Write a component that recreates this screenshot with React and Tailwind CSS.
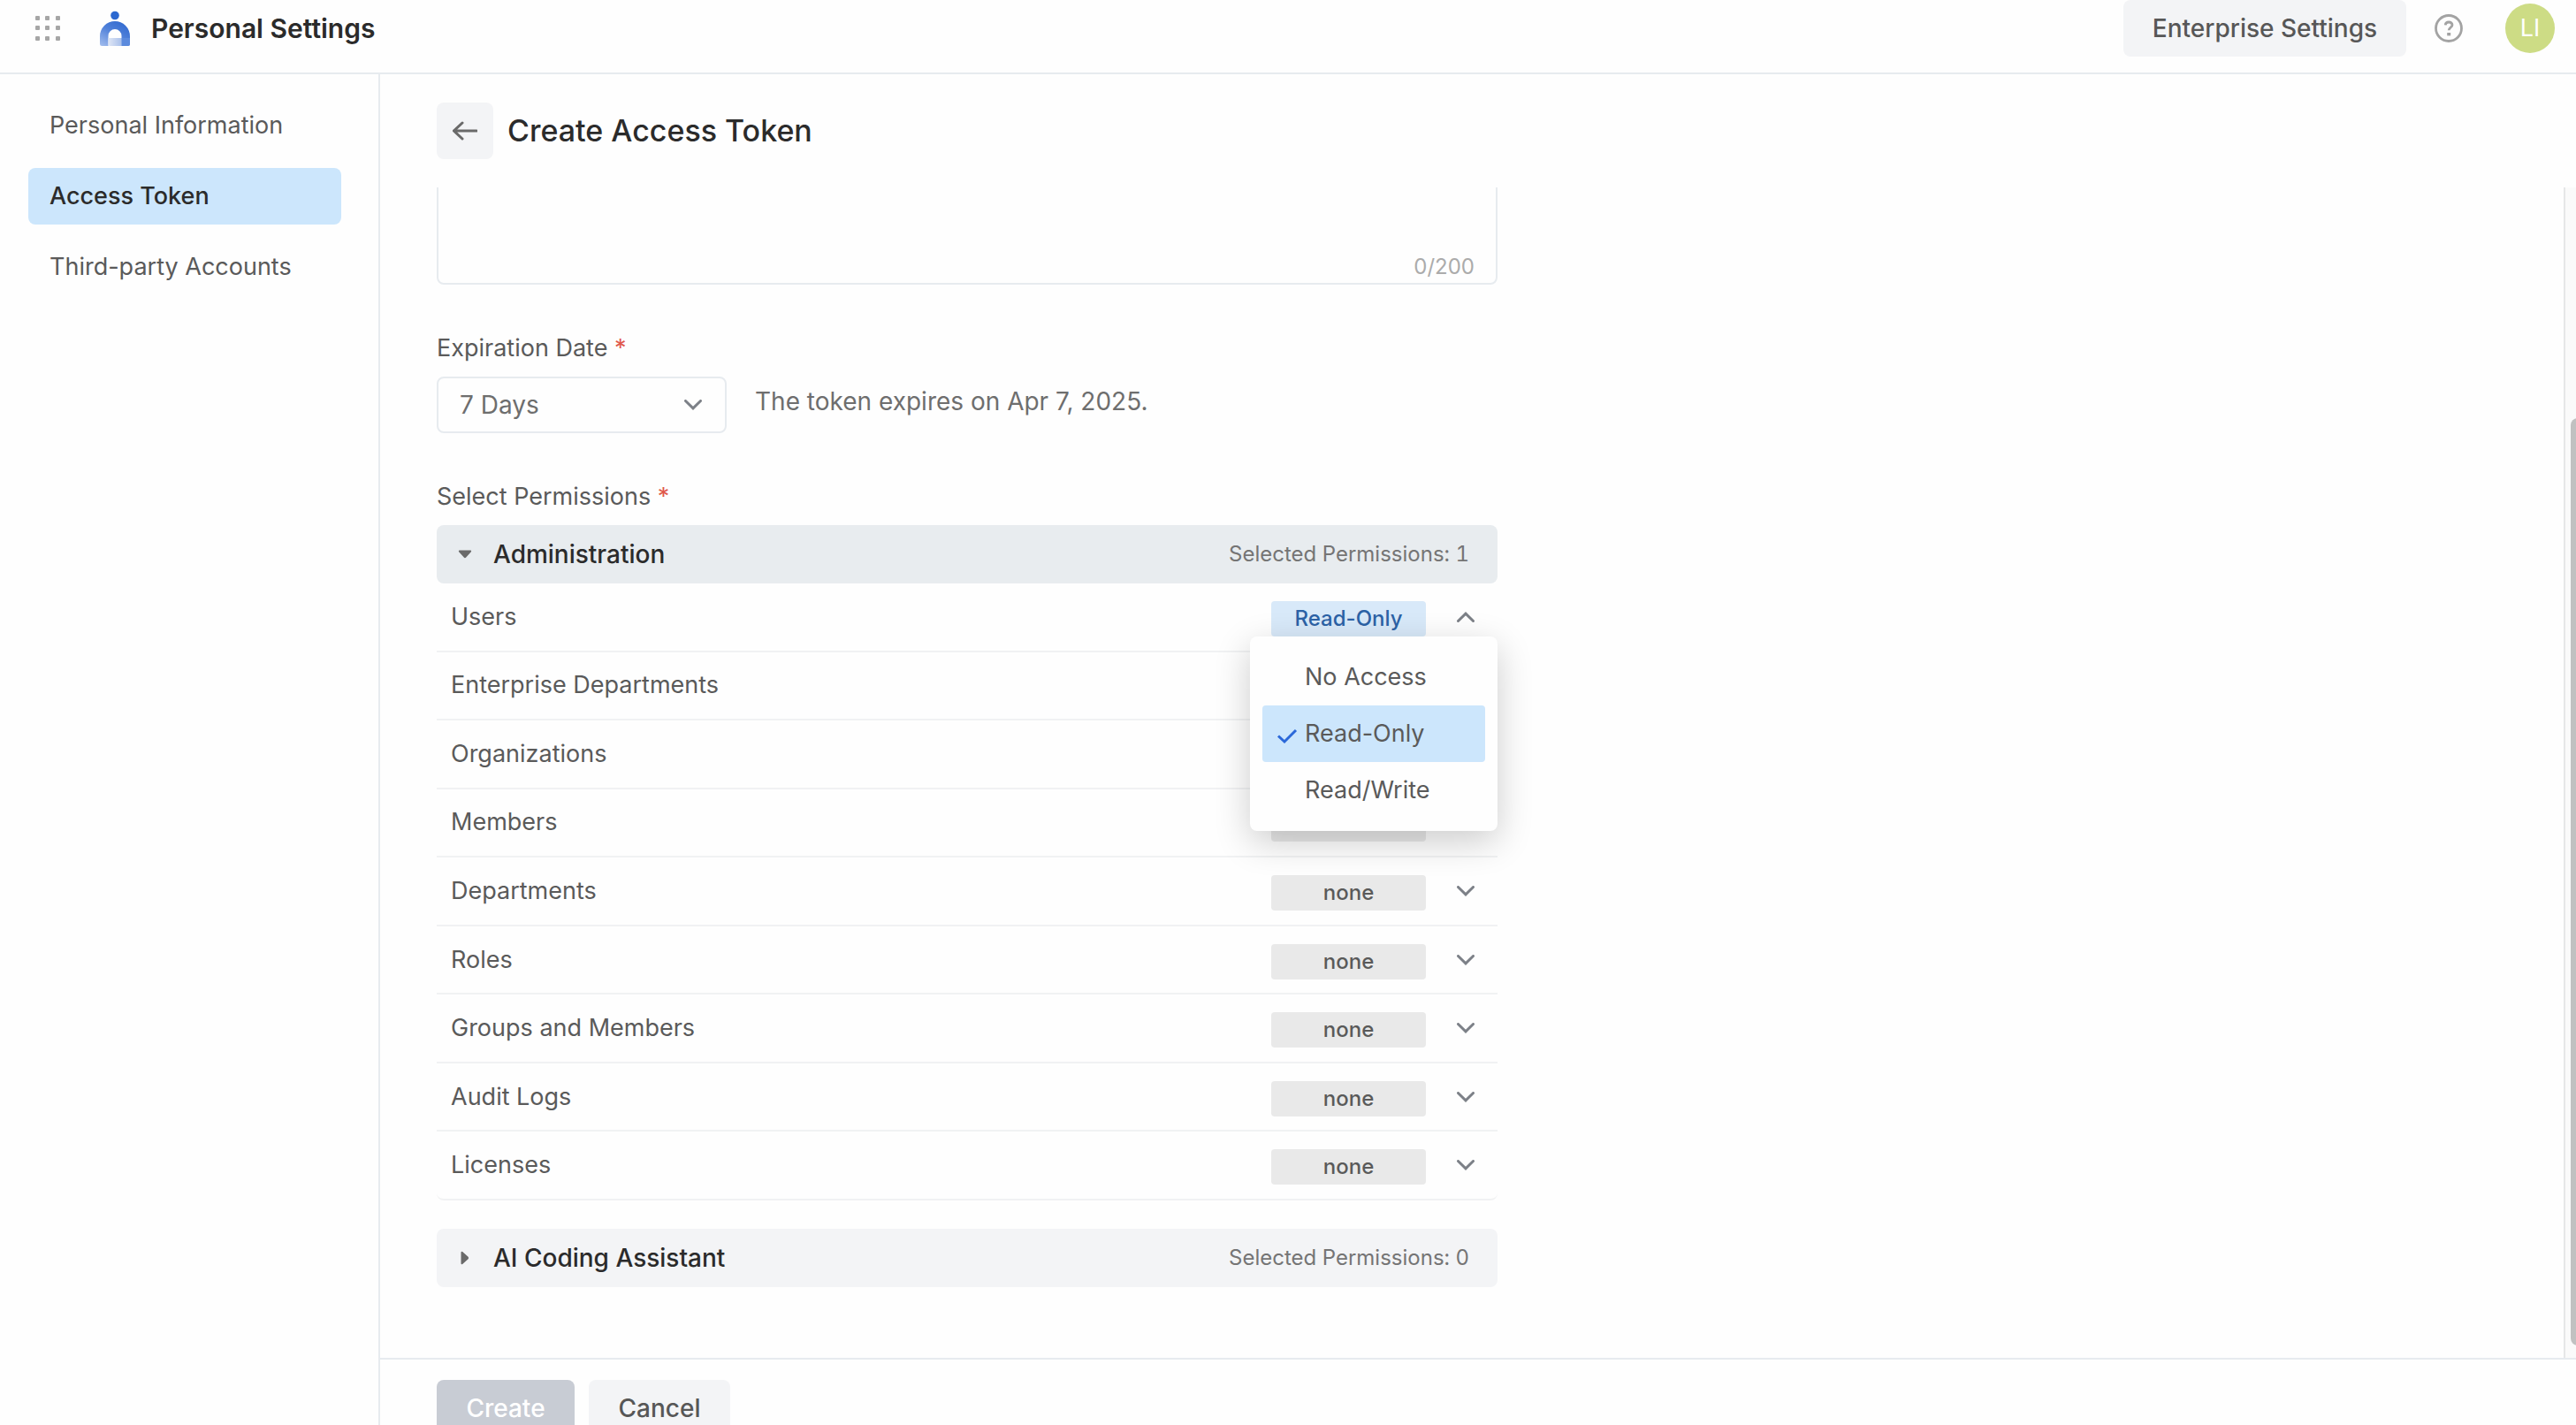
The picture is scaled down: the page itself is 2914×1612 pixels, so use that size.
import { useState } from 'react';

const PERMISSIONS = ['Users', 'Enterprise Departments', 'Organizations', 'Members', 'Departments', 'Roles', 'Groups and Members', 'Audit Logs', 'Licenses'];
const ACCESS = ['No Access', 'Read-Only', 'Read/Write'];

const navClass = 'flex h-16 items-center rounded-lg px-6';
const buttonClass = 'flex h-16 shrink-0 items-center justify-center rounded-lg bg-[#f3f4f6] text-[28px] font-medium text-[#575757]';

export default function App() {
  return (
    <div className="flex h-screen flex-col overflow-hidden bg-[#fefefe] font-['Inter',sans-serif] text-[27px] leading-10 text-[#5a5a5a]">
      <Header />
      <div className="flex min-h-0 flex-1">
        <Sidebar />
        <main className="flex min-w-0 flex-1 flex-col">
          <div className="flex items-center gap-4 px-16 py-8">
            <button aria-label="Back" className="flex size-16 items-center justify-center rounded-lg bg-[#f3f4f6]">
              <BackArrow />
            </button>
            <h1 className="text-[34px] font-medium text-[#2b2b2b]">Create Access Token</h1>
          </div>
          <div className="flex min-h-0 flex-1">
            <TokenForm />
            <div className="w-[14px] overflow-hidden border-l-2 border-[#e6e7e8] bg-[#fafafa] pt-[261px] pb-[14px] pl-[6px]">
              <div className="h-full w-4 rounded-lg bg-[#c1c1c1]" />
            </div>
          </div>
          <footer className="flex h-19 shrink-0 items-start gap-4 border-t-2 border-[#e7ebef] px-16 pt-[23px]">
            <button disabled className="flex h-16 w-39 shrink-0 items-center justify-center rounded-lg bg-[#c8ccd4] text-[28px] font-medium text-white">
              Create
            </button>
            <button className={`${buttonClass} w-40`}>Cancel</button>
          </footer>
        </main>
      </div>
    </div>
  );
}

function Header() {
  return (
    <header className="flex shrink-0 items-center border-b-2 border-[#e7ebef] pr-6 pb-[18px] pl-10">
      <button aria-label="Apps">
        <svg className="size-7" viewBox="0 0 28 28" fill="#a6a6a6">
          {[0, 11, 23].map((y) => [0, 11, 23].map((x) => <rect key={`${x}-${y}`} x={x} y={y} width="5" height="5" rx="1" />))}
        </svg>
      </button>
      <Logo />
      <span className="flex-1 pl-6 text-[30px] font-semibold text-[#2b2b2b]">Personal Settings</span>
      <button className={`${buttonClass} w-80`}>Enterprise Settings</button>
      <button aria-label="Help" className="mx-8">
        <svg className="size-8" viewBox="0 0 32 32" fill="none" stroke="#a3a3a3" strokeWidth="2.8">
          <circle cx="16" cy="16" r="14.5" />
          <path d="M12.2 12.4c.2-2 1.700-3.400 3.900-3.400 2.300 0 3.900 1.400 3.900 3.200 0 2.800-3.800 2.800-3.800 6.100" />
          <path d="M14.200 22.700h4" strokeWidth="3.400" />
        </svg>
      </button>
      <div className="ml-4 flex size-14 items-center justify-center rounded-full bg-[#cddc85] text-white">LI</div>
    </header>
  );
}

function Logo() {
  return (
    <svg className="ml-[45px] h-10 w-[34px]" viewBox="0 0 34 40">
      <defs>
        <linearGradient id="arch" x1="0.8" y1="0" x2="0.1" y2="1">
          <stop offset="0" stopColor="#3069cf" />
          <stop offset="0.45" stopColor="#4f80d9" />
          <stop offset="1" stopColor="#9db9ec" />
        </linearGradient>
        <linearGradient id="door" x1="0" y1="0" x2="1" y2="0">
          <stop offset="0" stopColor="#dfe6f5" />
          <stop offset="1" stopColor="#a9c0eb" />
        </linearGradient>
      </defs>
      <circle cx="17" cy="5.500" r="4.800" fill="#2b68d0" />
      <path d="M0 29a17 17 0 0 1 34 0v8.500q0 2.500-2.500 2.500H24.500V28.500a7.500 7.500 0 0 0-15 0V40H2.500Q0 40 0 37.500z" fill="url(#arch)" />
      <path d="M9.500 31h15v9h-13q-2 0-2-2z" fill="url(#door)" />
      <path d="M24.500 31H34v6.500q0 2.500-2.500 2.500h-7z" fill="#5b8add" />
    </svg>
  );
}

function Sidebar() {
  return (
    <nav className="flex w-[430px] shrink-0 flex-col gap-4 border-r-2 border-[#e7ebef] py-[26px] pr-[42px] pl-8">
      <a href="#info" className={navClass}>Personal Information</a>
      <a href="#token" className={`${navClass} bg-[#cce6fc] font-medium text-[#2b2b2b]`}>Access Token</a>
      <a href="#accounts" className={navClass}>Third-party Accounts</a>
    </nav>
  );
}

function TokenForm() {
  const [open, setOpen] = useState('Users');

  return (
    <form className="min-w-0 flex-1 overflow-hidden pl-16">
      <div className="max-w-[1200px]">
        {/* description box is scrolled partly out of view */}
        <div className="relative -mt-[90px]">
          <textarea aria-label="Description" className="block h-[200px] w-full resize-none rounded-lg border-2 border-[#e7ebef]" />
          <span className="absolute right-[26px] bottom-0 text-[24px] text-[#ababab]">0/200</span>
        </div>

        <Label htmlFor="expiration">Expiration Date</Label>
        <div className="flex items-start text-[28px] text-[#6e6e6e]">
          <div className="relative">
            <select id="expiration" className="h-16 w-82 appearance-none rounded-lg border-2 border-[#e7ebef] px-6">
              <option>7 Days</option>
            </select>
            <Chevron className="pointer-events-none absolute top-[26px] right-7" />
          </div>
          <span className="pt-2 pl-8">The token expires on Apr 7, 2025.</span>
        </div>

        <Label>Select Permissions</Label>
        <Group title="Administration" count={1} expanded />
        <ul className="grid h-[698px] auto-rows-fr">
          {PERMISSIONS.map((name) => (
            <Permission key={name} name={name} open={open === name} onToggle={() => setOpen(open === name ? '' : name)} />
          ))}
        </ul>
        <div className="pt-8">
          <Group title="AI Coding Assistant" count={0} />
        </div>
      </div>
    </form>
  );
}

function Label({ htmlFor, children }) {
  return (
    <label htmlFor={htmlFor} className="mt-13 mb-3 block">
      {children} <span className="text-[#e0584b]">*</span>
    </label>
  );
}

function Group({ title, count, expanded }) {
  return (
    <button type="button" aria-expanded={!!expanded} className={`flex h-[66px] w-full items-center rounded-lg pr-8 pl-6 ${expanded ? 'bg-[#e8ecef]' : 'bg-[#f3f4f6]'}`}>
      <svg className={`size-4 ${expanded ? '' : '-rotate-90'}`} viewBox="0 0 16 16" fill="#6a6a6a">
        <path d="M1.500 3.500h13q1.200.6.4 1.700L9.200 11.600q-1.200 1.200-2.400 0L1.100 5.200q-.8-1.100.4-1.700z" />
      </svg>
      <span className="flex-1 pl-6 text-left text-[28px] font-medium text-[#2b2b2b]">{title}</span>
      <span className="text-[24px] text-[#757575] tabular-nums">Selected Permissions: {count}</span>
    </button>
  );
}

function Permission({ name, open, onToggle }) {
  const readOnly = name === 'Users';
  return (
    <li className="relative flex items-center border-b-2 border-[#f1f2f3] pr-[26px] pl-4 last:rounded-b-lg">
      <span className="flex-1">{name}</span>
      <button type="button" onClick={onToggle} aria-expanded={open} className="flex items-center">
        <span className={`mt-1 flex h-10 w-[175px] items-center justify-center rounded text-[24px] font-medium ${readOnly ? 'bg-[#d8e9f9] text-[#2c62a6]' : 'bg-[#e9e9e9]'}`}>
          {readOnly ? 'Read-Only' : 'none'}
        </span>
        <Chevron className={open ? 'ml-[35px] rotate-180' : 'ml-[35px]'} />
      </button>
      {open && <AccessMenu />}
    </li>
  );
}

function AccessMenu() {
  return (
    <div role="listbox" className="absolute top-15 right-0 z-10 w-70 rounded-lg bg-[#fefefe] p-[14px] shadow-[0_12px_40px_rgba(0,0,0,0.2)]">
      {ACCESS.map((label) => {
        const selected = label === 'Read-Only';
        return (
          <button key={label} type="button" role="option" aria-selected={selected} className={`flex h-16 w-full items-center gap-2 rounded pl-4 ${selected ? 'bg-[#cce6fc]' : ''}`}>
            <svg className="size-6" viewBox="0 0 24 24" fill="none" stroke="#2b68d9" strokeWidth="3">
              {selected && <path d="M2 14.500l7 6.500L22 8" />}
            </svg>
            {label}
          </button>
        );
      })}
    </div>
  );
}

function Chevron({ className }) {
  return (
    <svg className={`h-3 w-5 ${className}`} viewBox="0 0 20 12" fill="none" stroke="#7c8087" strokeWidth="3" strokeLinecap="round">
      <path d="M1.500 1.500L10 9.800l8.500-8.300" />
    </svg>
  );
}

function BackArrow() {
  return (
    <svg className="size-7" viewBox="0 0 28 28" fill="none" stroke="#6a6a6a" strokeWidth="3" strokeLinecap="round">
      <path d="M1.500 14H27M11 5l-9.500 9 9.500 9" />
    </svg>
  );
}
